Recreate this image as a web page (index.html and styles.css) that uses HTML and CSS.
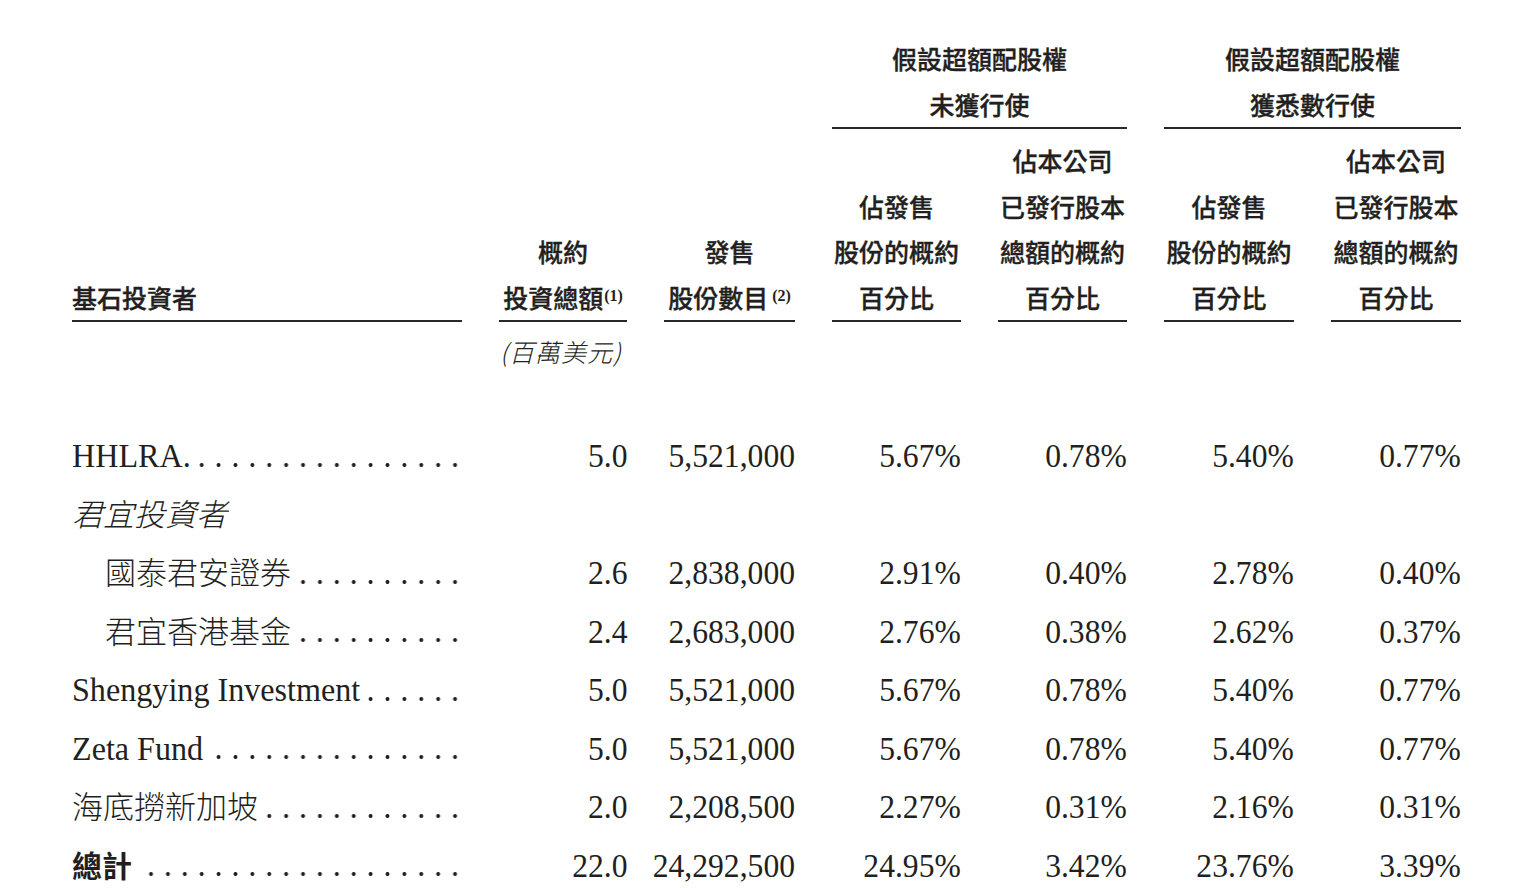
FILE: index.html
```html
<!DOCTYPE html>
<html lang="zh-Hant">
<head>
<meta charset="utf-8">
<title>基石投資者</title>
<link rel="stylesheet" href="styles.css">
</head>
<body>
<div class="page">
  <div class="cols head1">
    <div class="grp grp-a"><div>假設超額配股權</div><div>未獲行使</div></div>
    <div class="grp grp-b"><div>假設超額配股權</div><div>獲悉數行使</div></div>
  </div>
  <div class="cols head2">
    <div class="hd hd-left">基石投資者</div>
    <div class="hd">概約<br>投資總額<span class="fn">(1)</span></div>
    <div class="hd">發售<br>股份數目<span class="fn fn2">(2)</span></div>
    <div class="hd">佔發售<br>股份的概約<br>百分比</div>
    <div class="hd">佔本公司<br>已發行股本<br>總額的概約<br>百分比</div>
    <div class="hd">佔發售<br>股份的概約<br>百分比</div>
    <div class="hd">佔本公司<br>已發行股本<br>總額的概約<br>百分比</div>
  </div>
  <div class="cols unitrow">
    <div class="unit">(百萬美元)</div>
  </div>

  <div class="cols row">
    <div class="lbl"><span class="name en">HHLRA.</span></div>
    <div class="num"><span class="n">5.0</span></div>
    <div class="num"><span class="n">5,521,000</span></div>
    <div class="num"><span class="n">5.67%</span></div>
    <div class="num"><span class="n">0.78%</span></div>
    <div class="num"><span class="n">5.40%</span></div>
    <div class="num"><span class="n">0.77%</span></div>
  </div>
  <div class="cols row">
    <div class="lbl-plain"><span class="name zh it">君宜投資者</span></div>
  </div>
  <div class="cols row">
    <div class="lbl sub"><span class="name zh">國泰君安證券</span></div>
    <div class="num"><span class="n">2.6</span></div>
    <div class="num"><span class="n">2,838,000</span></div>
    <div class="num"><span class="n">2.91%</span></div>
    <div class="num"><span class="n">0.40%</span></div>
    <div class="num"><span class="n">2.78%</span></div>
    <div class="num"><span class="n">0.40%</span></div>
  </div>
  <div class="cols row">
    <div class="lbl sub"><span class="name zh">君宜香港基金</span></div>
    <div class="num"><span class="n">2.4</span></div>
    <div class="num"><span class="n">2,683,000</span></div>
    <div class="num"><span class="n">2.76%</span></div>
    <div class="num"><span class="n">0.38%</span></div>
    <div class="num"><span class="n">2.62%</span></div>
    <div class="num"><span class="n">0.37%</span></div>
  </div>
  <div class="cols row">
    <div class="lbl"><span class="name en">Shengying Investment</span></div>
    <div class="num"><span class="n">5.0</span></div>
    <div class="num"><span class="n">5,521,000</span></div>
    <div class="num"><span class="n">5.67%</span></div>
    <div class="num"><span class="n">0.78%</span></div>
    <div class="num"><span class="n">5.40%</span></div>
    <div class="num"><span class="n">0.77%</span></div>
  </div>
  <div class="cols row">
    <div class="lbl"><span class="name en">Zeta Fund</span></div>
    <div class="num"><span class="n">5.0</span></div>
    <div class="num"><span class="n">5,521,000</span></div>
    <div class="num"><span class="n">5.67%</span></div>
    <div class="num"><span class="n">0.78%</span></div>
    <div class="num"><span class="n">5.40%</span></div>
    <div class="num"><span class="n">0.77%</span></div>
  </div>
  <div class="cols row">
    <div class="lbl"><span class="name zh">海底撈新加坡</span></div>
    <div class="num"><span class="n">2.0</span></div>
    <div class="num"><span class="n">2,208,500</span></div>
    <div class="num"><span class="n">2.27%</span></div>
    <div class="num"><span class="n">0.31%</span></div>
    <div class="num"><span class="n">2.16%</span></div>
    <div class="num"><span class="n">0.31%</span></div>
  </div>
  <div class="cols row">
    <div class="lbl"><span class="name zh tot">總計</span></div>
    <div class="num"><span class="n">22.0</span></div>
    <div class="num"><span class="n">24,292,500</span></div>
    <div class="num"><span class="n">24.95%</span></div>
    <div class="num"><span class="n">3.42%</span></div>
    <div class="num"><span class="n">23.76%</span></div>
    <div class="num"><span class="n">3.39%</span></div>
  </div>
</div>
</body>
</html>
```

FILE: styles.css
```css
html, body {
  margin: 0;
  padding: 0;
  background: #ffffff;
}

body {
  color: #231f20;
  font-family: "Liberation Serif", "Noto Sans CJK TC", serif;
  overflow: hidden;
}

.page {
  padding: 36px 0 0 72px;
}

.cols {
  display: grid;
  grid-template-columns: 390px 128px 131px 129px 129px 130px 130px;
  column-gap: 37px;
}

/* ---------- header ---------- */
.head1,
.head2 {
  font-family: "Noto Sans CJK TC", "Noto Sans CJK SC", sans-serif;
  font-weight: 500;
  font-size: 25px;
  line-height: 45.5px;
  -webkit-text-stroke: 0.35px #231f20;
}

.grp {
  text-align: center;
  border-bottom: 2px solid #2b2728;
  margin-bottom: 9px;
}

.grp-a { grid-column: 4 / 6; }
.grp-b { grid-column: 6 / 8; }

.head2 {
  align-items: end;
}

.hd {
  text-align: center;
  border-bottom: 2px solid #2b2728;
  white-space: nowrap;
}

.hd-left {
  text-align: left;
}

.fn {
  font-family: "Liberation Serif", serif;
  font-weight: 700;
  font-size: 16px;
  line-height: 0;
  vertical-align: 7px;
  margin-left: 1px;
  -webkit-text-stroke: 0;
}

.fn2 {
  margin-left: 4px;
}

.unitrow {
  padding-bottom: 53px;
}

.unit {
  grid-column: 2;
  margin-top: 7px;
  font-family: "Noto Sans CJK TC", sans-serif;
  font-weight: 300;
  font-style: italic;
  font-size: 25px;
  letter-spacing: 1px;
  line-height: 45px;
  white-space: nowrap;
  padding-left: 1px;
}

/* ---------- body rows ---------- */
.row {
  font-family: "Liberation Serif", serif;
  font-size: 34px;
  line-height: 58.5px;
  height: 58.5px;
}

.lbl,
.lbl-plain {
  white-space: nowrap;
}

.lbl {
  background-image: radial-gradient(circle, #231f20 0, #231f20 1.6px, rgba(35, 31, 32, 0) 2.3px);
  background-size: 16.9px 6px;
  background-repeat: repeat-x;
  background-position: right -1.5px top 34.5px;
  background-clip: content-box;
}

.sub {
  padding-left: 33px;
}

.name {
  display: inline-block;
  background: #ffffff;
  padding-right: 4px;
}

.en {
  transform: scaleX(0.945);
  transform-origin: left center;
}

.zh {
  font-family: "Noto Sans CJK TC", "Noto Sans CJK SC", sans-serif;
  font-weight: 300;
  font-size: 31px;
  line-height: 1;
}

.it {
  font-style: italic;
}

.tot {
  font-weight: 700;
  font-size: 30px;
  padding-right: 10px;
}

.num {
  display: flex;
  justify-content: flex-end;
  white-space: nowrap;
}

.n {
  display: inline-block;
  transform: scaleX(0.93);
  transform-origin: right center;
}
```
